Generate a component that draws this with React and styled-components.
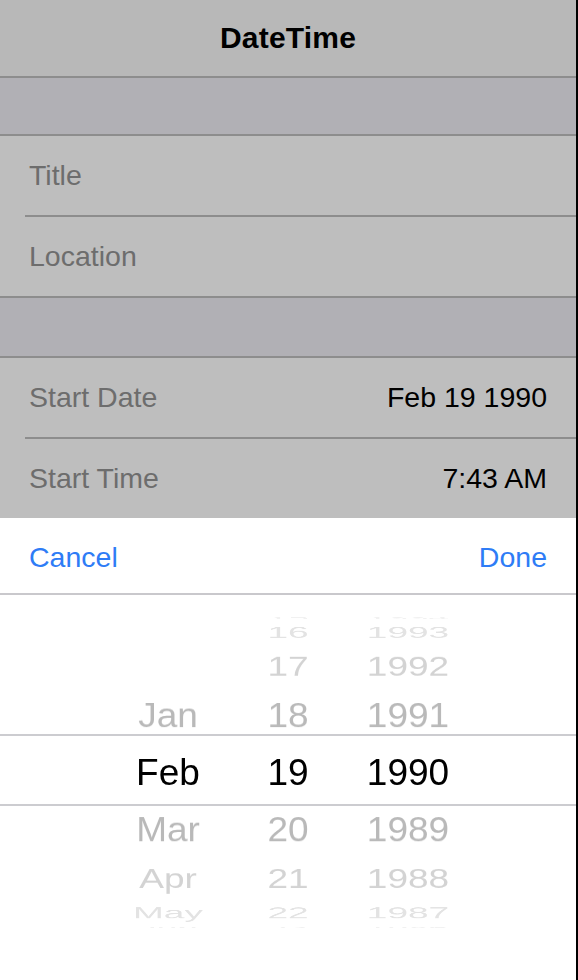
import React from "react";
import styled, { createGlobalStyle } from "styled-components";

const GlobalStyle = createGlobalStyle`
  html, body {
    margin: 0;
    padding: 0;
    background: #000;
  }
  body {
    font-family: "Liberation Sans", Arial, sans-serif;
  }
`;

const months = ["Jan", "Feb", "Mar", "Apr", "May", "Jun"];
const days = [15, 16, 17, 18, 19, 20, 21, 22, 23];
const years = [1994, 1993, 1992, 1991, 1990, 1989, 1988, 1987, 1986];

// wheel geometry: radius and angle between two rows
const RADIUS = 155;
const STEP = 21.6;
const shades = ["#000000", "#b9b9b9", "#d3d3d3", "#e3e3e3", "#f1f1f1"];

export default function App() {
  return (
    <Screen>
      <GlobalStyle />
      <NavBar>
        <NavTitle>DateTime</NavTitle>
      </NavBar>
      <SectionGap />
      <Group>
        <Row>
          <RowInner $sep>
            <Label>Title</Label>
          </RowInner>
        </Row>
        <Row>
          <RowInner>
            <Label>Location</Label>
          </RowInner>
        </Row>
      </Group>
      <SectionGap $height={58} />
      <Group $last>
        <Row>
          <RowInner $sep>
            <Label>Start Date</Label>
            <Value>Feb 19 1990</Value>
          </RowInner>
        </Row>
        <Row>
          <RowInner>
            <Label>Start Time</Label>
            <Value>7:43 AM</Value>
          </RowInner>
        </Row>
      </Group>
      <Sheet>
        <Toolbar>
          <ToolButton>Cancel</ToolButton>
          <ToolButton>Done</ToolButton>
        </Toolbar>
        <Wheel>
          <Band />
          <Column>
            {months.map((m, i) => (
              <Item key={m} $k={i - 1}>
                {m}
              </Item>
            ))}
          </Column>
          <Column>
            {days.map((d, i) => (
              <Item key={d} $k={i - 4}>
                {d}
              </Item>
            ))}
          </Column>
          <Column>
            {years.map((y, i) => (
              <Item key={y} $k={i - 4}>
                {y}
              </Item>
            ))}
          </Column>
        </Wheel>
      </Sheet>
    </Screen>
  );
}

const Screen = styled.div`
  width: 576px;
  height: 980px;
  display: flex;
  flex-direction: column;
  background: #bebebe;
  overflow: hidden;
`;

const NavBar = styled.div`
  height: 76px;
  display: flex;
  align-items: center;
  justify-content: center;
  background: #b8b8b8;
  border-bottom: 2px solid #8d8d8d;
`;

const NavTitle = styled.div`
  font-size: 30px;
  font-weight: bold;
  color: #000;
  letter-spacing: 0.2px;
`;

const SectionGap = styled.div`
  height: ${(p) => p.$height || 56}px;
  background: #b1b0b5;
  border-bottom: 2px solid #8d8d8d;
`;

const Group = styled.div`
  background: #bebebe;
  border-bottom: ${(p) => (p.$last ? "none" : "2px solid #8d8d8d")};
`;

const Row = styled.div`
  padding-left: 25px;
`;

const RowInner = styled.div`
  height: 79px;
  display: flex;
  align-items: center;
  justify-content: space-between;
  padding: 0 29px 0 4px;
  border-bottom: ${(p) => (p.$sep ? "2px solid #8d8d8d" : "none")};
`;

const Label = styled.span`
  font-size: 28.5px;
  color: #6d6d6d;
`;

const Value = styled.span`
  font-size: 28.5px;
  color: #000;
`;

const Sheet = styled.div`
  flex: 1;
  display: flex;
  flex-direction: column;
  background: #fff;
`;

const Toolbar = styled.div`
  height: 77px;
  display: flex;
  align-items: center;
  justify-content: space-between;
  padding: 3px 29px 0;
  box-sizing: border-box;
  border-bottom: 2px solid #c9c8cc;
`;

const ToolButton = styled.span`
  font-size: 28.5px;
  color: #2e7cf6;
`;

const Wheel = styled.div`
  position: relative;
  height: 350px;
  display: flex;
  justify-content: center;
  overflow: hidden;
`;

const Band = styled.div`
  position: absolute;
  left: 0;
  right: 0;
  top: 50%;
  height: 68px;
  margin-top: -36px;
  border-top: 2px solid #ccccd0;
  border-bottom: 2px solid #ccccd0;
  pointer-events: none;
`;

const Column = styled.div`
  position: relative;
  width: 120px;
  height: 100%;
`;

const Item = styled.div`
  position: absolute;
  left: 0;
  right: 0;
  top: 50%;
  height: 58px;
  margin-top: -26px;
  line-height: 58px;
  text-align: center;
  font-size: 37px;
  color: ${(p) => shades[Math.min(Math.abs(p.$k), 4)]};
  backface-visibility: hidden;
  transform: rotateX(${(p) => -p.$k * STEP}deg) translateZ(${RADIUS}px);
`;
